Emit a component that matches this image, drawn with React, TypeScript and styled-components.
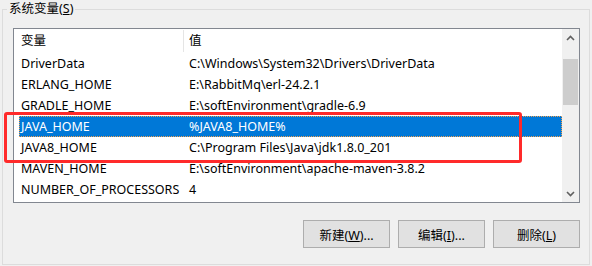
import React from 'react'
import styled, { createGlobalStyle } from 'styled-components'

const GlobalStyle = createGlobalStyle`
    html, body {
        margin: 0;
        padding: 0;
        background: #f0f0f0;
    }
    body {
        font-family: "Noto Sans", "Noto Sans CJK SC", sans-serif;
        font-size: 12.5px;
        color: #000;
    }
`

interface EnvVar {
    name: string;
    value: string;
}

const vars: EnvVar[] = [
    { name: 'DriverData', value: 'C:\\Windows\\System32\\Drivers\\DriverData' },
    { name: 'ERLANG_HOME', value: 'E:\\RabbitMq\\erl-24.2.1' },
    { name: 'GRADLE_HOME', value: 'E:\\softEnvironment\\gradle-6.9' },
    { name: 'JAVA_HOME', value: '%JAVA8_HOME%' },
    { name: 'JAVA8_HOME', value: 'C:\\Program Files\\Java\\jdk1.8.0_201' },
    { name: 'MAVEN_HOME', value: 'E:\\softEnvironment\\apache-maven-3.8.2' },
    { name: 'NUMBER_OF_PROCESSORS', value: '4' },
]

const selectedIndex = 3

const Chevron: React.FC<{ down?: boolean }> = ({ down }) => (
    <svg width="9" height="6" viewBox="0 0 9 6">
        <path
            d={down ? 'M1 1 L4.5 4.5 L8 1' : 'M1 5 L4.5 1.5 L8 5'}
            fill="none"
            stroke="#606060"
            strokeWidth="1.6"
        />
    </svg>
)

const App: React.FC = () => {
    return (
        <Page>
            <GlobalStyle />
            <Group>
                <Legend>系统变量(<u>S</u>)</Legend>
                <ListView>
                    <Table>
                        <Header>
                            <HeadCell>变量</HeadCell>
                            <HeadCell $last>值</HeadCell>
                        </Header>
                        {vars.map((v, i) => (
                            <Row key={v.name} $selected={i === selectedIndex}>
                                <NameCell>{v.name}</NameCell>
                                <ValueCell>{v.value}</ValueCell>
                            </Row>
                        ))}
                    </Table>
                    <ScrollBar>
                        <Arrow><Chevron /></Arrow>
                        <Track>
                            <Thumb $offset={13} $size={46} />
                        </Track>
                        <Arrow><Chevron down /></Arrow>
                    </ScrollBar>
                </ListView>
                <Buttons>
                    <Button>新建(<u>W</u>)...</Button>
                    <Button>编辑(<u>I</u>)...</Button>
                    <Button>删除(<u>L</u>)</Button>
                </Buttons>
            </Group>
            <Highlight />
        </Page>
    )
}

const Page = styled.div`
    position: relative;
    width: 592px;
    height: 266px;
    overflow: hidden;
`
const Group = styled.fieldset`
    box-sizing: border-box;
    margin: 0 0 0 2px;
    padding: 0 0 0 10px;
    width: 588px;
    height: 265px;
    border: 1px solid #dcdcdc;
    min-width: 0;
`
const Legend = styled.legend`
    padding: 0 2px;
    margin-left: -6px;
    line-height: 18px;
    height: 18px;
`
const ListView = styled.div`
    box-sizing: border-box;
    margin-top: 10px;
    width: 567px;
    height: 175px;
    border: 1px solid #828790;
    background: #fff;
    display: grid;
    grid-template-columns: 1fr 17px;
    overflow: hidden;
`
const Table = styled.div`
    overflow: hidden;
    display: flex;
    flex-direction: column;
`
const Header = styled.div`
    display: grid;
    grid-template-columns: 170px 1fr;
    height: 24px;
    flex-shrink: 0;
`
const HeadCell = styled.div<{ $last?: boolean }>`
    line-height: 22px;
    padding-left: ${p => (p.$last ? '5px' : '7px')};
    border-right: ${p => (p.$last ? 'none' : '1px solid #e5e5e5')};
    margin: 1px 0;
`
const Row = styled.div<{ $selected?: boolean }>`
    box-sizing: border-box;
    display: grid;
    grid-template-columns: 165px 1fr;
    height: 21px;
    line-height: 19px;
    margin-left: 5px;
    flex-shrink: 0;
    white-space: nowrap;
    background: ${p => (p.$selected ? '#0078d7' : 'transparent')};
    color: ${p => (p.$selected ? '#fff' : '#000')};
    border: 1px dotted ${p => (p.$selected ? '#f0a050' : 'transparent')};
`
const NameCell = styled.div`
    padding-left: 1px;
    overflow: hidden;
`
const ValueCell = styled.div`
    padding-left: 4px;
    overflow: hidden;
`
const ScrollBar = styled.div`
    background: #f0f0f0;
    display: flex;
    flex-direction: column;
`
const Arrow = styled.div`
    height: 17px;
    display: flex;
    align-items: center;
    justify-content: center;
    flex-shrink: 0;
`
const Track = styled.div`
    flex: 1;
    display: flex;
    flex-direction: column;
    align-items: center;
`
const Thumb = styled.div<{ $offset: number; $size: number }>`
    width: 15px;
    margin-top: ${p => p.$offset}px;
    height: ${p => p.$size}px;
    background: #cdcdcd;
`
const Buttons = styled.div`
    display: flex;
    justify-content: flex-end;
    gap: 8px;
    width: 567px;
    margin-top: 17px;
`
const Button = styled.button`
    box-sizing: border-box;
    width: 87px;
    height: 28px;
    background: #e1e1e1;
    border: 1px solid #adadad;
    border-radius: 0;
    font-family: "Noto Sans", "Noto Sans CJK SC", sans-serif;
    font-size: 12.5px;
    color: #000;
    padding: 0;
`
const Highlight = styled.div`
    position: absolute;
    left: 4px;
    top: 112px;
    width: 518px;
    height: 51px;
    box-sizing: border-box;
    border: 3px solid #ff2a2a;
    border-radius: 3px;
    pointer-events: none;
`

export default App
